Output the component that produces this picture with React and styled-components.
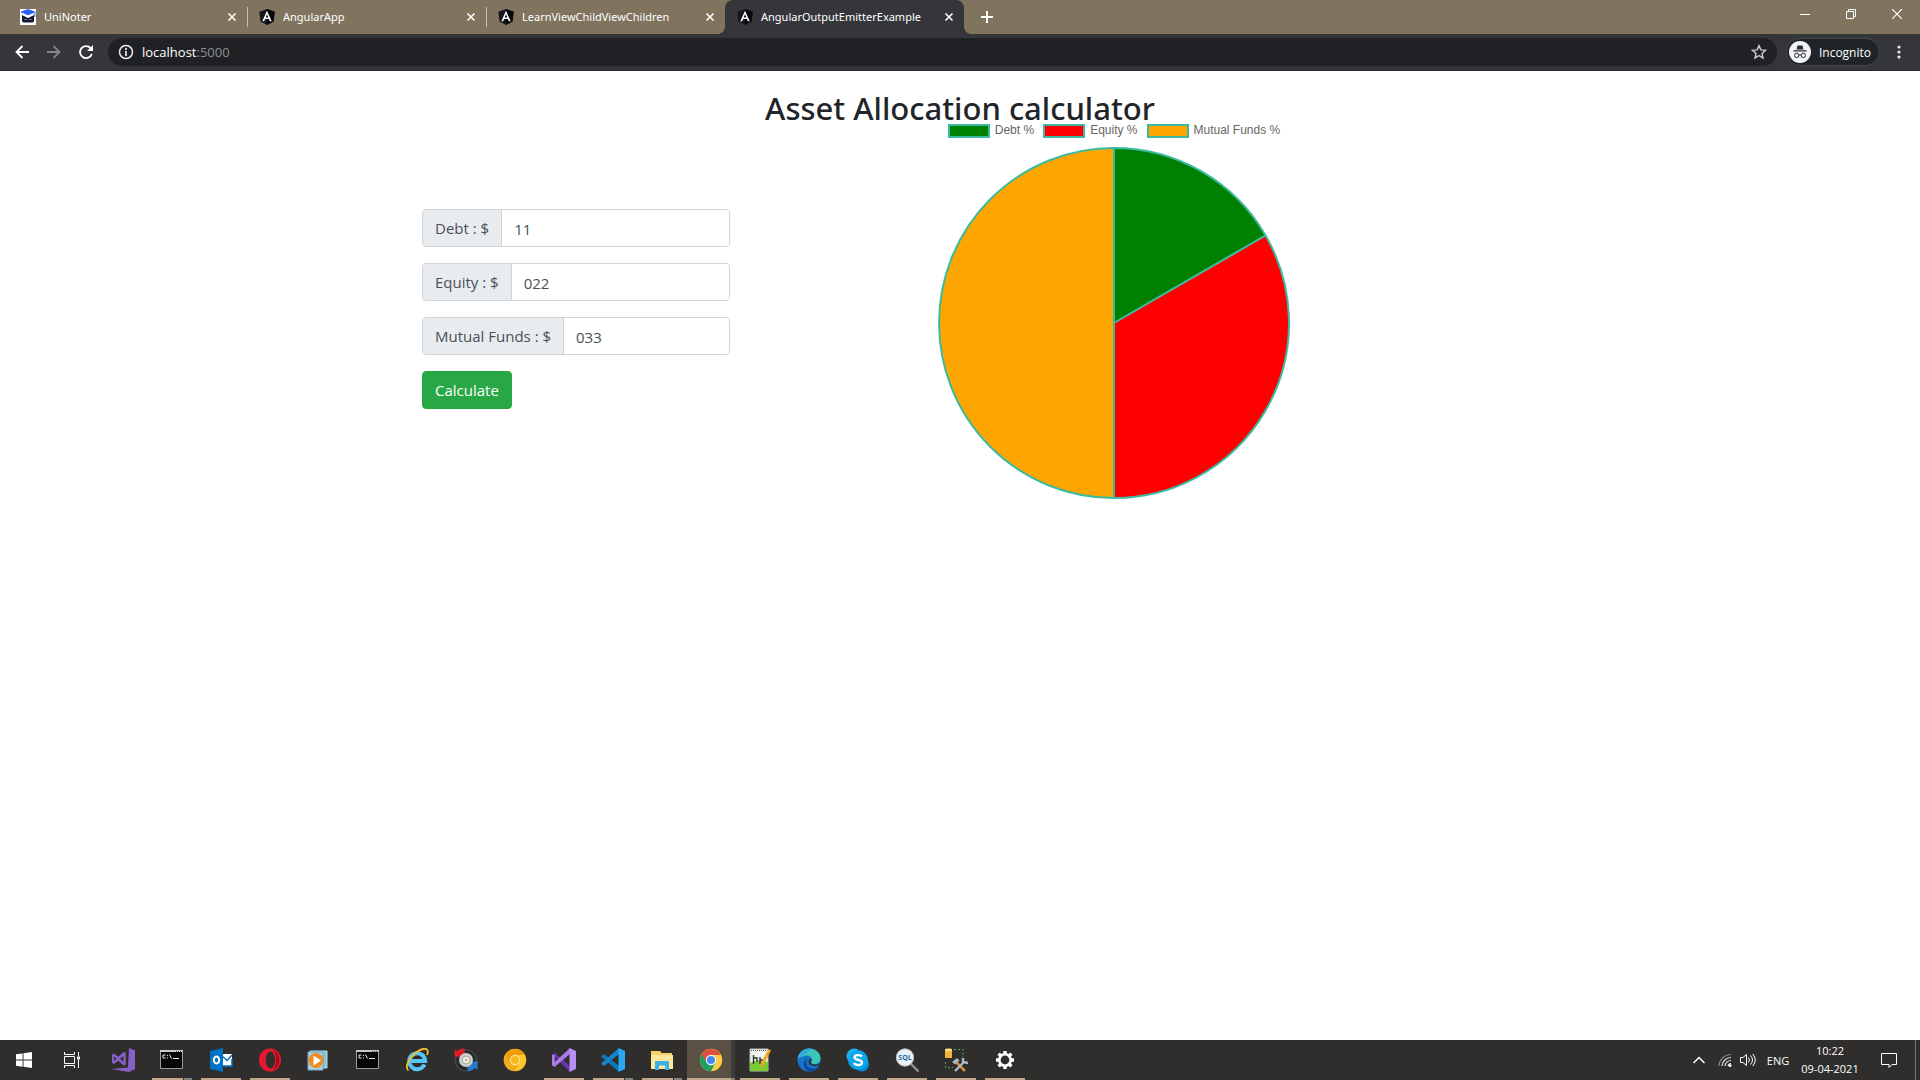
import React, { useState } from "react";
import styled, { createGlobalStyle } from "styled-components";

const uiFont = `"Segoe UI", "Open Sans", "Noto Sans", sans-serif`;

const GlobalStyle = createGlobalStyle`
  *, *::before, *::after { box-sizing: border-box; }
  body { margin: 0; background: #fff; color: #212529; font-family: ${uiFont}; }
  button, input { font-family: inherit; }
`;

/* ---------- window ---------- */
const Screen = styled.div`
  display: flex;
  flex-direction: column;
  min-height: 100vh;
`;

const PlainButton = styled.button`
  display: flex;
  align-items: center;
  justify-content: center;
  flex: none;
  padding: 0;
  border: 0;
  background: transparent;
  color: #fff;
`;

/* ---------- tab strip ---------- */
const TabStrip = styled.header`
  display: flex;
  height: 34px;
  padding-left: 8px;
  background: #80745f;
`;

const Tab = styled.div`
  position: relative;
  display: flex;
  align-items: center;
  gap: 8px;
  width: 239px;
  padding: 0 7px 0 12px;
  color: #fff;
  background: ${(p) => (p.$active ? "#35363a" : "transparent")};
  border-radius: 8px 8px 0 0;
  ${(p) =>
    p.$divider &&
    `&::after {
      content: "";
      position: absolute;
      right: -1px;
      top: 7px;
      width: 1px;
      height: 20px;
      background: #c5bfb2;
    }`}
  ${(p) =>
    p.$active &&
    `&::before, &::after {
      content: "";
      position: absolute;
      bottom: 0;
      width: 8px;
      height: 8px;
    }
    &::before { left: -8px; background: radial-gradient(circle at 0 0, transparent 8px, #35363a 8px); }
    &::after { right: -8px; background: radial-gradient(circle at 100% 0, transparent 8px, #35363a 8px); }`}
`;

const TabTitle = styled.span`
  flex: 1;
  font-family: "Segoe UI", "Noto Sans", sans-serif;
  font-size: 11px;
  line-height: 16px;
  white-space: nowrap;
`;

const TabClose = styled(PlainButton)`
  width: 16px;
  height: 16px;
`;

const NewTab = styled(PlainButton)`
  width: 28px;
  margin-left: 9px;
`;

const WindowButtons = styled.div`
  display: flex;
  margin-left: auto;
`;

const WindowButton = styled(PlainButton)`
  width: 46px;
  height: 28px;
`;

/* ---------- toolbar ---------- */
const Toolbar = styled.nav`
  display: flex;
  align-items: center;
  height: 37px;
  padding: 0 9px 0 6px;
  background: #35363a;
  border-bottom: 1px solid #29292c;
`;

const NavButton = styled(PlainButton)`
  width: 32px;
  height: 28px;
`;

const AddressBar = styled.div`
  display: flex;
  flex: 1;
  align-items: center;
  gap: 8px;
  height: 28px;
  margin: 0 9px 0 6px;
  padding: 0 10px;
  border-radius: 14px;
  background: #202124;
`;

const Address = styled.div`
  flex: 1;
  color: #8d9095;
  font-size: 13px;
  line-height: 20px;
`;

const Host = styled.span`
  color: #fff;
`;

const IncognitoButton = styled(PlainButton)`
  gap: 8px;
  height: 28px;
  padding: 0 8px 0 2px;
  border: 1px solid #43464a;
  border-radius: 14px;
  background: #202428;
  font-size: 12px;
`;

const MenuButton = styled(PlainButton)`
  width: 24px;
  height: 28px;
  margin-left: 7px;
`;

/* ---------- page ---------- */
const Page = styled.main`
  flex: 1;
  padding-top: 21px;
`;

const Heading = styled.h1`
  margin: 0;
  font-family: "Segoe UI", "Noto Sans", sans-serif;
  font-size: 31px;
  font-weight: 500;
  line-height: 32px;
  text-align: center;
`;

const Container = styled.div`
  display: flex;
  align-items: flex-start;
  max-width: 1140px;
  margin: 0 auto;
  padding: 0 32px;
`;

const Form = styled.form`
  display: flex;
  flex-direction: column;
  align-items: flex-start;
  gap: 16px;
  width: 308px;
  padding-top: 85px;
  font-size: 15px;
  line-height: 24px;
`;

const InputGroup = styled.div`
  display: flex;
  width: 100%;
  height: 38px;
  border: 1px solid #ced4da;
  border-radius: 4px;
  overflow: hidden;
  color: #495057;
`;

const GroupLabel = styled.label`
  padding: 6px 12px;
  border-right: 1px solid #ced4da;
  background: #e9ecef;
  line-height: 24px;
  white-space: nowrap;
`;

const GroupInput = styled.input`
  flex: 1;
  min-width: 0;
  padding: 8px 12px 6px;
  border: 0;
  outline: 0;
  color: inherit;
  font-size: 15px;
`;

const Calculate = styled.button`
  height: 38px;
  padding: 0 12px;
  border: 1px solid #28a745;
  border-radius: 4px;
  background: #28a745;
  color: #fff;
  font-size: 15px;
  line-height: 24px;
`;

const Chart = styled.section`
  display: flex;
  flex: 1;
  flex-direction: column;
  align-items: center;
  gap: 9px;
`;

const Legend = styled.ul`
  display: flex;
  gap: 9px;
  margin: 0;
  padding: 0;
  list-style: none;
`;

const LegendItem = styled.li`
  display: flex;
  align-items: flex-start;
  gap: 5px;
  height: 14px;
  color: #666;
  font-family: "Liberation Sans", Arial, sans-serif;
  font-size: 12px;
  line-height: 12px;
`;

const Swatch = styled.span`
  width: 42px;
  height: 14px;
  border: 2px solid #3cba9f;
  background: ${(p) => p.$color};
`;

/* ---------- taskbar ---------- */
const Taskbar = styled.footer`
  display: flex;
  height: 40px;
  background: #2f2e2c;
  color: #fff;
`;

const SystemButton = styled(PlainButton)`
  width: 48px;
`;

const AppList = styled.div`
  display: flex;
  gap: 1px;
  margin-left: 3px;
`;

const AppButton = styled(PlainButton)`
  position: relative;
  width: 48px;
  background: ${(p) => (p.$active ? "linear-gradient(90deg, #5a5044 44px, #3f3d3b 44px)" : "transparent")};
  &::after {
    content: "";
    position: absolute;
    bottom: 0;
    left: ${(p) => (p.$active ? 0 : 4)}px;
    right: ${(p) => (p.$active ? 0 : 4)}px;
    height: 2px;
    background: ${(p) =>
      p.$windows === "many"
        ? "linear-gradient(90deg, #bfa98a calc(100% - 9px), #2f2e2c calc(100% - 9px), #2f2e2c calc(100% - 8px), #85817b calc(100% - 8px))"
        : p.$active
        ? "linear-gradient(90deg, #bfa98a 44px, #85817b 44px)"
        : p.$windows
        ? "#bfa98a"
        : "transparent"};
  }
`;

const Tray = styled.div`
  display: flex;
  align-items: center;
  margin-left: auto;
`;

const TrayButton = styled(PlainButton)`
  width: ${(p) => p.$width}px;
  height: 40px;
  font-size: 11px;
`;

const Clock = styled.time`
  width: 66px;
  font-size: 11px;
  line-height: 18px;
  text-align: center;
  white-space: nowrap;
`;

const ShowDesktop = styled(PlainButton)`
  width: 5px;
  height: 40px;
  border-left: 1px solid #777571;
`;

/* ---------- icons ---------- */
const Svg = ({ s = 24, box = 24, children, ...rest }) => (
  <svg width={s} height={s} viewBox={`0 0 ${box} ${box}`} fill="none" aria-hidden="true" {...rest}>
    {children}
  </svg>
);

const AngularIcon = () => (
  <Svg s={16} box={16}>
    <path d="M8 0l7.7 2.7-1.2 9.8L8 16l-6.500-3.500L.3 2.700z" fill="#14171c" />
    <path d="M8 0v16l6.500-3.500 1.200-9.800z" fill="#05070a" />
    <path d="M8 1.800L3.300 12.300h1.900l.9-2.400h3.800l.9 2.400h1.900zm0 3.500l1.300 3.100H6.700z" fill="#fff" />
  </Svg>
);

const UniNoterIcon = () => (
  <Svg s={16} box={16}>
    <path fill="#fff" d="M0 0h16v16H0z" />
    <path d="M8 0l8 3-8 3.200L0 3z" fill="#2b62f6" />
    <path d="M14.300 3.500h1V8h-1z" fill="#2b62f6" />
    <path d="M2 6l6 3 6-3v6.500l-1.500 1h-9L2 12.500z" fill="#161a33" />
    <path d="M2.500 5.500L8 8l5.500-2.500" stroke="#fff" />
    <path d="M4.500 10.500h2.500M9 10.500h2.500" stroke="#7e8192" />
  </Svg>
);

const CloseIcon = () => (
  <Svg s={10} box={10}>
    <path d="M1.500 1.500l7 7M8.500 1.500l-7 7" stroke="#fff" strokeWidth="1.600" />
  </Svg>
);

const PlusIcon = () => (
  <Svg s={12} box={12}>
    <path d="M6 0v12M0 6h12" stroke="#fff" strokeWidth="2" />
  </Svg>
);

const IncognitoIcon = () => (
  <Svg s={22} box={22}>
    <circle cx="11" cy="11" r="11" fill="#f1f3f4" />
    <path d="M7.500 8.500l1-4h5l1 4zM4.500 9.300h13v1.200h-13z" fill="#2b2c30" />
    <circle cx="7.700" cy="14.400" r="2.200" stroke="#2b2c30" />
    <circle cx="14.300" cy="14.400" r="2.200" stroke="#2b2c30" />
    <path d="M9.900 14h2.200" stroke="#2b2c30" />
  </Svg>
);

const WindowsIcon = () => (
  <Svg s={16} box={16}>
    <path fill="#fff" d="M0 2.300L6.600 1.400v6.200H0zM7.500 1.200L16 0v7.600H7.500zM0 8.500h6.600v6.200L0 13.700zM7.500 8.500H16V16l-8.500-1.200z" />
  </Svg>
);

const TaskViewIcon = () => (
  <Svg s={18} box={18} stroke="#fff">
    <path d="M1.500 1v2.500h10V1M1.500 17v-2.500h10V17M1.500 5.500h10v7h-10zM15.500 1v4M15.500 9v8" />
    <path fill="#fff" stroke="none" d="M14 5.500h3v3h-3z" />
  </Svg>
);

const VsOldIcon = () => (
  <Svg>
    <path d="M18 0l6 2.500V21l-6 3L0 21l17-1.500z" fill="#8661c5" />
    <path d="M1 6.500l2-1 4.200 3.200L12.800 4l2 .8v12l-2 .8-5.600-4.800L3 16l-2-1zM3 8.500v4.500l2.400-2.200zm9.500-.5L9 10.800l3.500 2.900z" fill="#8661c5" fillRule="evenodd" />
  </Svg>
);

const TerminalIcon = () => (
  <Svg>
    <path fill="#060606" stroke="#9a9c9f" d="M.5 2.500h22v18H.5z" />
    <path fill="#c3cad2" d="M0 2h23v2H0z" />
    <path d="M16 3.500h1M18 3.500h1M20 3.500h1" stroke="#34455f" />
    <path d="M5.500 7H3v3h2.500M7.500 7v1M7.500 9.500v1M9.500 6.500l2 4M13 10.500h6" stroke="#ececec" />
  </Svg>
);

const OutlookIcon = () => (
  <Svg>
    <path fill="#fff" d="M13 6h10v12H13z" />
    <path d="M13 8l5 4.500L23 7M13 18h10v-7" stroke="#0072c6" strokeWidth="1.500" />
    <path fill="#0072c6" d="M1 3l13-3v24L1 21z" />
    <ellipse cx="7.500" cy="12" rx="2.700" ry="3.500" stroke="#fff" strokeWidth="2" />
  </Svg>
);

const OperaIcon = () => (
  <Svg>
    <path fillRule="evenodd" fill="#e8192c" d="M12 .5a11 11.500 0 100 23 11 11.500 0 000-23zm.4 3c2.700 0 4.600 3.700 4.600 8.500s-1.900 8.500-4.600 8.500S7.800 16.800 7.800 12s1.900-8.500 4.600-8.500z" />
    <path d="M15 2.500c4 1 6.500 5 6.500 9.500s-2.500 8.500-6.500 9.500c2-2 3-5.500 3-9.500s-1-7.500-3-9.500z" fill="#a60d1c" />
  </Svg>
);

const MediaIcon = () => (
  <Svg>
    <path fill="#86c3d9" stroke="#b9dfe9" d="M3 3h17v17H3z" />
    <path fill="#a9d5e4" stroke="#6aa9c4" d="M1 4h15v18H1z" />
    <circle cx="9" cy="12.500" r="7.500" fill="#f08a24" />
    <path fill="#fff" d="M6.500 7.500l7.500 5-7.500 5z" />
  </Svg>
);

const IeIcon = () => (
  <Svg>
    <path d="M19.500 16.500a8 8 0 11.700-3.500H6" stroke="#56c5f4" strokeWidth="4" />
    <path d="M3.500 22.500C-2 18 9 3 18 1c6-1.200 5 3.500 4 6" stroke="#f4bd29" strokeWidth="1.800" />
  </Svg>
);

const DiscIcon = () => (
  <Svg>
    <circle cx="12" cy="12.500" r="11" fill="#4a4f52" />
    <circle cx="12" cy="12.500" r="10" fill="#26292b" />
    <path d="M.5 8.500V1l2.500 2C5 1 7.500.5 10.500.5L11 6 6.500 9z" fill="#d71f2c" />
    <path d="M23.500 13v9l-2.500-2c-2 2-4 3-7 3.500L13 18l5-4z" fill="#2878cc" />
    <circle cx="12" cy="12" r="7" fill="#ced0cf" />
    <circle cx="12" cy="12" r="4" fill="#eceadd" stroke="#a5a69e" />
    <circle cx="12" cy="12" r="1" fill="#999" />
  </Svg>
);

const ChromeIcon = ({ canary }) => {
  const [red, yellow, green, dot] = canary
    ? ["#f39a08", "#ffc62b", "#f0ad1c", "#fab61d"]
    : ["#dd4f40", "#ffcd45", "#1aa15f", "#4689f4"];
  return (
    <Svg>
      <circle cx="12" cy="12" r="11.200" fill={yellow} />
      <path d="M12 12L2.300 6.400A11.200 11.200 0 0012 23.200l4.400-8.600z" fill={green} />
      <path d="M12 12L7.600 14.600 2.300 6.400A11.200 11.200 0 0121.700 7H12z" fill={red} />
      <circle cx="12" cy="12" r="5.200" fill={canary ? "#ffe4a0" : "#fff"} />
      <circle cx="12" cy="12" r="4.100" fill={dot} />
    </Svg>
  );
};

const VsIcon = () => (
  <Svg>
    <path d="M2.500 4.500L18 18v6L1 7z" fill="#6b35b2" />
    <path d="M0 6.500v11L2.500 19 18 6V0L2.800 14V7z" fill="#a87be8" />
    <path d="M17.500 0L24 3v18l-6.500 3z" fill="#b98ff3" />
  </Svg>
);

const VsCodeIcon = () => (
  <Svg>
    <path d="M1.500 7L3 6l15 12v6L0 8.500z" fill="#0877b9" />
    <path d="M1.500 17L3 18 18 6V0L0 15.500z" fill="#1485cb" />
    <path d="M17.500 0L24 3v18l-6.500 3z" fill="#29a9f2" />
  </Svg>
);

const ExplorerIcon = () => (
  <Svg>
    <path d="M1 3h9l1.500 2H22v16H1z" fill="#f6cf6b" />
    <path d="M1 7h22v14H1z" fill="#ffe79e" />
    <path d="M5 13h14v9h-4v-4.500H9V22H5z" fill="#3fb0e6" />
  </Svg>
);

const NotepadIcon = () => (
  <Svg>
    <path d="M2 1h18v22H2z" fill="#eef2ec" stroke="#bbb" />
    <path d="M3 2.500h16" stroke="#555" strokeDasharray="1 1" />
    <path d="M2 15c6-3 10-3 18-1v9H2z" fill="#7cc936" />
    <path d="M5.500 7v9M5.500 10H9v4M12 9v7M12 12h4" stroke="#333" strokeWidth="1.400" />
    <path d="M20.500 1l2.500 1.500-8 15-3 2 .5-3.500z" fill="#f0a91e" />
  </Svg>
);

const EdgeIcon = () => (
  <Svg>
    <circle cx="12" cy="12" r="11.500" fill="#1673c9" />
    <path d="M.8 10.500C2 4 7 .5 12 .5c7 0 11.500 5 11.500 9.500 0 4-3 6-6 6-2.500 0-4-1-3-3 1.500-4-3.500-6.500-7.500-5-3 1-5.500 2-6.200 2.500z" fill="#3bc6b5" />
    <path d="M.8 10.500C2 4 7 .5 12 .5c3 0 5 .8 6.500 1.800C10 1 12 5 7 6.500z" fill="#35a8dd" />
    <path d="M12 9c-5 3-3.500 11 3 11.500 3 .3 5.500-.5 7-1.500-1.800 2.800-5 4.500-9 4.500C5 22 5 12 12 9z" fill="#0c4a94" />
    <path d="M13.500 10.500c1.500 0 1 2 .4 3.500 0 2 2 2.500 4 2.500 2 0 4-.5 5-1.500l-.5 2c-4 2-10 1-10.500-2-.2-2 .3-4 1.600-4.500z" fill="#2f2e2c" />
  </Svg>
);

const SkypeIcon = () => (
  <Svg>
    <circle cx="8" cy="8" r="7.500" fill="#19b6f2" />
    <circle cx="16" cy="16.500" r="7" fill="#0088d8" />
    <circle cx="12" cy="12" r="10" fill="#09a5ea" />
    <path d="M16 8.500c-1-1.600-7.500-2.400-7.500.8 0 3.400 7.500 1.900 7.500 5.200 0 3.600-7 3-8 .5" stroke="#fff" strokeWidth="2.400" />
  </Svg>
);

const SqlText = styled.text`
  font-family: "Open Sans", sans-serif;
  font-size: 7px;
  font-weight: 700;
`;

const SqlIcon = () => (
  <Svg>
    <path d="M15.500 15.500l8 8" stroke="#8e8f92" strokeWidth="2.400" />
    <circle cx="10" cy="9.500" r="8.700" fill="#e9f0f5" stroke="#b7bcc0" />
    <SqlText x="10" y="12" textAnchor="middle" fill="#1b6ba5">SQL</SqlText>
  </Svg>
);

const ToolsIcon = () => (
  <Svg>
    <path d="M10 1.500h9V9M1.500 14v5.500H9" stroke="#4fae4b" strokeDasharray="2 2" />
    <path d="M1 1h7v9H1z" fill="#f0b43a" />
    <ellipse cx="4.500" cy="1.700" rx="3.500" ry="1.300" fill="#ffe08a" />
    <path d="M12 14l9 9" stroke="#d48a3c" strokeWidth="2.600" />
    <path d="M8 14l5-4 2.500 2.500-4.500 4z" fill="#aab4bf" />
    <path d="M11 23l9-9M19 10v4l5 1" stroke="#aeb9c6" strokeWidth="2.400" />
  </Svg>
);

const GearIcon = () => (
  <Svg>
    <circle cx="12" cy="12" r="5.700" stroke="#fff" strokeWidth="2.600" />
    <path
      d="M12 3v3M12 18v3M3 12h3M18 12h3M5.600 5.600l2.200 2.200M16.200 16.200l2.200 2.200M18.400 5.600l-2.200 2.200M7.800 16.200l-2.200 2.200"
      stroke="#fff"
      strokeWidth="3.400"
    />
  </Svg>
);

/* ---------- data ---------- */
const tabs = [
  { title: "UniNoter", icon: UniNoterIcon, divider: true },
  { title: "AngularApp", icon: AngularIcon, divider: true },
  { title: "LearnViewChildViewChildren", icon: AngularIcon },
  { title: "AngularOutputEmitterExample", icon: AngularIcon, active: true },
];

const apps = [
  { name: "Visual Studio", icon: VsOldIcon },
  { name: "Command Prompt", icon: TerminalIcon, windows: "many" },
  { name: "Outlook", icon: OutlookIcon, windows: "one" },
  { name: "Opera", icon: OperaIcon, windows: "one" },
  { name: "Media Player", icon: MediaIcon },
  { name: "Terminal", icon: TerminalIcon },
  { name: "Internet Explorer", icon: IeIcon },
  { name: "Disc", icon: DiscIcon },
  { name: "Chrome Canary", icon: () => <ChromeIcon canary /> },
  { name: "Visual Studio 2019", icon: VsIcon, windows: "one" },
  { name: "Visual Studio Code", icon: VsCodeIcon, windows: "many" },
  { name: "File Explorer", icon: ExplorerIcon, windows: "many" },
  { name: "Chrome", icon: ChromeIcon, windows: "one", active: true },
  { name: "Notepad++", icon: NotepadIcon, windows: "one" },
  { name: "Edge", icon: EdgeIcon, windows: "one" },
  { name: "Skype", icon: SkypeIcon, windows: "one" },
  { name: "SQL Search", icon: SqlIcon, windows: "one" },
  { name: "Management Studio", icon: ToolsIcon, windows: "one" },
  { name: "Settings", icon: GearIcon, windows: "one" },
];

const assets = [
  { id: "debt", label: "Debt", color: "#008000", initial: "11" },
  { id: "equity", label: "Equity", color: "#ff0000", initial: "022" },
  { id: "funds", label: "Mutual Funds", color: "#ffa500", initial: "033" },
];

const RADIUS = 175;
const CENTER = 176;

function PieChart({ values }) {
  const total = values.reduce((a, b) => a + b, 0) || 1;
  let start = 0;
  const point = (f) => {
    const a = f * 2 * Math.PI;
    return `${CENTER + RADIUS * Math.sin(a)} ${CENTER - RADIUS * Math.cos(a)}`;
  };
  return (
    <svg width="352" height="352" viewBox="0 0 352 352" role="img" aria-label="Asset allocation">
      {values.map((value, i) => {
        const end = start + value / total;
        const large = end - start > 0.5 ? 1 : 0;
        const d = `M${point(start)}A${RADIUS} ${RADIUS} 0 ${large} 1 ${point(end)}L${CENTER} ${CENTER}Z`;
        start = end;
        return (
          <path key={assets[i].id} d={d} fill={assets[i].color} stroke="#3cba9f" strokeWidth="2" strokeLinejoin="bevel" />
        );
      })}
    </svg>
  );
}

export default function App() {
  const [amounts, setAmounts] = useState(assets.map((a) => a.initial));
  const [values, setValues] = useState(assets.map((a) => Number(a.initial)));

  const calculate = (e) => {
    e.preventDefault();
    setValues(amounts.map((a) => Number(a) || 0));
  };

  return (
    <Screen>
      <GlobalStyle />
      <TabStrip>
        {tabs.map(({ title, icon: Icon, active, divider }) => (
          <Tab key={title} $active={active} $divider={divider}>
            <Icon />
            <TabTitle>{title}</TabTitle>
            <TabClose aria-label={`Close ${title}`}><CloseIcon /></TabClose>
          </Tab>
        ))}
        <NewTab aria-label="New tab"><PlusIcon /></NewTab>
        <WindowButtons>
          <WindowButton aria-label="Minimize">
            <Svg s={10} box={10}><path d="M0 5.500h10" stroke="#fff" /></Svg>
          </WindowButton>
          <WindowButton aria-label="Restore">
            <Svg s={10} box={10}><path d="M.5 2.500h7v7h-7zM2.500 2.500v-2h7v7h-2" stroke="#fff" /></Svg>
          </WindowButton>
          <WindowButton aria-label="Close window">
            <Svg s={10} box={10}><path d="M0 0l10 10M10 0L0 10" stroke="#fff" strokeWidth="1.200" /></Svg>
          </WindowButton>
        </WindowButtons>
      </TabStrip>

      <Toolbar>
        <NavButton aria-label="Back">
          <Svg s={14} box={14}><path d="M14 7H1.500M7.500 1L1.500 7l6 6" stroke="#fff" strokeWidth="1.800" /></Svg>
        </NavButton>
        <NavButton aria-label="Forward">
          <Svg s={14} box={14}><path d="M0 7h12.500M6.500 1l6 6-6 6" stroke="#85868a" strokeWidth="1.800" /></Svg>
        </NavButton>
        <NavButton aria-label="Reload">
          <Svg s={14} box={14}>
            <path d="M12.800 9A6 6 0 1111.500 3" stroke="#fff" strokeWidth="1.900" />
            <path d="M14 0v6H8z" fill="#fff" />
          </Svg>
        </NavButton>
        <AddressBar>
          <Svg s={16} box={16}>
            <circle cx="8" cy="8" r="6.500" stroke="#e8eaed" strokeWidth="1.500" />
            <path d="M8 7v5M8 4v2" stroke="#e8eaed" strokeWidth="1.700" />
          </Svg>
          <Address><Host>localhost</Host>:5000</Address>
          <PlainButton aria-label="Bookmark this page">
            <Svg s={16} box={24}>
              <path
                d="M12 2.500l2.800 6.300 6.900.7-5.200 4.600 1.500 6.800-6-3.500-6 3.500 1.500-6.800-5.200-4.600 6.900-.7z"
                stroke="#c6c8ca"
                strokeWidth="2.200"
              />
            </Svg>
          </PlainButton>
        </AddressBar>
        <IncognitoButton><IncognitoIcon />Incognito</IncognitoButton>
        <MenuButton aria-label="Menu">
          <Svg s={14} box={14}>
            <circle cx="7" cy="2" r="1.600" fill="#e8eaed" />
            <circle cx="7" cy="7" r="1.600" fill="#e8eaed" />
            <circle cx="7" cy="12" r="1.600" fill="#e8eaed" />
          </Svg>
        </MenuButton>
      </Toolbar>

      <Page>
        <Heading>Asset Allocation calculator</Heading>
        <Container>
          <Form onSubmit={calculate}>
            {assets.map(({ id, label }, i) => (
              <InputGroup key={id}>
                <GroupLabel htmlFor={id}>{label} : $</GroupLabel>
                <GroupInput
                  id={id}
                  value={amounts[i]}
                  onChange={(e) => setAmounts(amounts.map((a, j) => (j === i ? e.target.value : a)))}
                />
              </InputGroup>
            ))}
            <Calculate type="submit">Calculate</Calculate>
          </Form>
          <Chart>
            <Legend>
              {assets.map(({ id, label, color }) => (
                <LegendItem key={id}><Swatch $color={color} />{label} %</LegendItem>
              ))}
            </Legend>
            <PieChart values={values} />
          </Chart>
        </Container>
      </Page>

      <Taskbar>
        <SystemButton aria-label="Start"><WindowsIcon /></SystemButton>
        <SystemButton aria-label="Task view"><TaskViewIcon /></SystemButton>
        <AppList>
          {apps.map(({ name, icon: Icon, windows, active }) => (
            <AppButton key={name} aria-label={name} $windows={windows} $active={active}><Icon /></AppButton>
          ))}
        </AppList>
        <Tray>
          <TrayButton $width={28} aria-label="Show hidden icons">
            <Svg s={12} box={12}><path d="M.5 9L6 3.500 11.500 9" stroke="#fff" strokeWidth="1.500" /></Svg>
          </TrayButton>
          <TrayButton $width={24} aria-label="Network">
            <Svg s={14} box={14}>
              <path d="M1 13A12 12 0 0113 1.500" stroke="#8d8c8a" strokeWidth="1.200" />
              <path d="M4 13a9 9 0 019-8.500M7 13a6 6 0 016-5.500M10 13a3 3 0 013-2.500" stroke="#e5e5e5" strokeWidth="1.200" />
              <circle cx="12" cy="12.500" r="1.500" fill="#fff" />
            </Svg>
          </TrayButton>
          <TrayButton $width={22} aria-label="Volume">
            <Svg s={16} box={16}>
              <path d="M.5 5.500h2.500L6.500 2.500v11L3 10.500H.5zM8.500 5.500q2 2.500 0 5M10.500 3.500q4 4.500 0 9M12.800 2q5 6 0 12" stroke="#fff" />
            </Svg>
          </TrayButton>
          <TrayButton $width={38}>ENG</TrayButton>
          <Clock>10:22<br />09-04-2021</Clock>
          <TrayButton $width={52} aria-label="Notifications">
            <Svg s={16} box={16}><path d="M.5 1.500h15v11H11l-3 3v-3H.5z" stroke="#fff" /></Svg>
          </TrayButton>
          <ShowDesktop aria-label="Show desktop" />
        </Tray>
      </Taskbar>
    </Screen>
  );
}
